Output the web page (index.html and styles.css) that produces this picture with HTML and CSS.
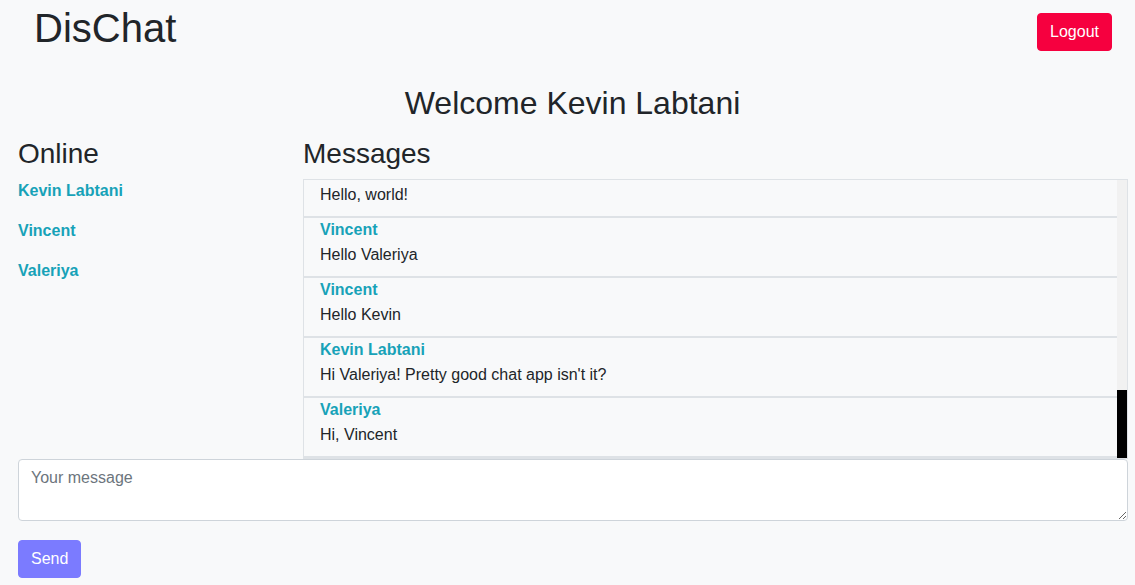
FILE: index.html
```html
<!DOCTYPE html>
<html lang="en">
<head>
<meta charset="utf-8">
<title>DisChat</title>
<link rel="stylesheet" href="styles.css">
</head>
<body>
<header class="topbar">
  <div class="brand">DisChat</div>
  <button class="btn btn-logout">Logout</button>
</header>
<h2 class="welcome">Welcome Kevin Labtani</h2>
<main class="main">
  <div class="columns">
    <section class="col-online">
      <h3 class="section-title">Online</h3>
      <p class="user">Kevin Labtani</p>
      <p class="user">Vincent</p>
      <p class="user">Valeriya</p>
    </section>
    <section class="col-messages">
      <h3 class="section-title">Messages</h3>
      <div class="messages">
        <div class="viewport">
          <div class="message-list">
            <div class="msg msg-partial"><div class="msg-text">Hello, world!</div></div>
            <div class="msg"><div class="msg-author">Vincent</div><div class="msg-text">Hello Valeriya</div></div>
            <div class="msg"><div class="msg-author">Vincent</div><div class="msg-text">Hello Kevin</div></div>
            <div class="msg"><div class="msg-author">Kevin Labtani</div><div class="msg-text">Hi Valeriya! Pretty good chat app isn't it?</div></div>
            <div class="msg"><div class="msg-author">Valeriya</div><div class="msg-text">Hi, Vincent</div></div>
          </div>
        </div>
        <div class="scrollbar"><div class="thumb"></div></div>
      </div>
    </section>
  </div>
  <form class="composer" onsubmit="return false">
    <textarea class="input" rows="2" placeholder="Your message"></textarea>
    <button class="btn btn-send" type="submit">Send</button>
  </form>
</main>
</body>
</html>
```

FILE: styles.css
```css
html, body {
  margin: 0;
  padding: 0;
  background: #f8f9fa;
}
body {
  font-family: "Liberation Sans", Arial, sans-serif;
  font-size: 16px;
  line-height: 1.5;
  color: #212529;
  height: 585px;
  overflow: hidden;
}
.topbar {
  display: flex;
  justify-content: space-between;
  align-items: flex-start;
  padding: 4px 23px 0 34px;
  height: 84px;
  box-sizing: border-box;
}
.brand {
  font-size: 40px;
  line-height: 48px;
  font-weight: 400;
}
.btn {
  font-family: inherit;
  font-size: 16px;
  line-height: 24px;
  padding: 6px 12px;
  border: 1px solid transparent;
  border-radius: 4px;
  color: #fff;
  cursor: pointer;
}
.btn-logout {
  margin-top: 9px;
  background: #f6003f;
  border-color: #f6003f;
}
.welcome {
  margin: 0;
  padding-left: 10px;
  text-align: center;
  font-size: 32px;
  line-height: 38.4px;
  font-weight: 400;
}
.main {
  padding: 0 7px 0 18px;
}
.columns {
  display: flex;
  margin-top: 15px;
}
.col-online {
  width: 270px;
  flex: none;
  margin-right: 15px;
}
.col-messages {
  flex: 1;
  min-width: 0;
}
.section-title {
  margin: 0 0 8px;
  font-size: 28px;
  line-height: 33.6px;
  font-weight: 400;
}
.user {
  margin: 0 0 16px;
  font-weight: 700;
  color: #17a2b8;
}
.messages {
  height: 278px;
  border: 1px solid #dee2e6;
  display: flex;
}
.viewport {
  flex: 1;
  min-width: 0;
  overflow: hidden;
  display: flex;
  flex-direction: column-reverse;
}
.scrollbar {
  width: 10px;
  flex: none;
  background: #f1f1f1;
  display: flex;
  flex-direction: column;
  justify-content: flex-end;
}
.thumb {
  height: 68px;
  background: #000;
}
.msg {
  padding: 2px 16px 9px;
  border-bottom: 2px solid #dee2e6;
}
.msg-partial {
  padding-top: 1px;
}
.msg-author {
  font-weight: 700;
  color: #17a2b8;
  line-height: 20px;
  margin-bottom: 3px;
}
.msg-text {
  line-height: 24px;
}
.composer {
  margin: 0;
}
.input {
  display: block;
  width: 100%;
  box-sizing: border-box;
  height: 62px;
  padding: 6px 12px;
  font-family: inherit;
  font-size: 16px;
  line-height: 24px;
  color: #495057;
  background: #fff;
  border: 1px solid #ced4da;
  border-radius: 4px;
  resize: vertical;
}
.input::placeholder {
  color: #6c757d;
}
.btn-send {
  margin-top: 19px;
  background: #7b7bff;
  border-color: #7b7bff;
}
```
